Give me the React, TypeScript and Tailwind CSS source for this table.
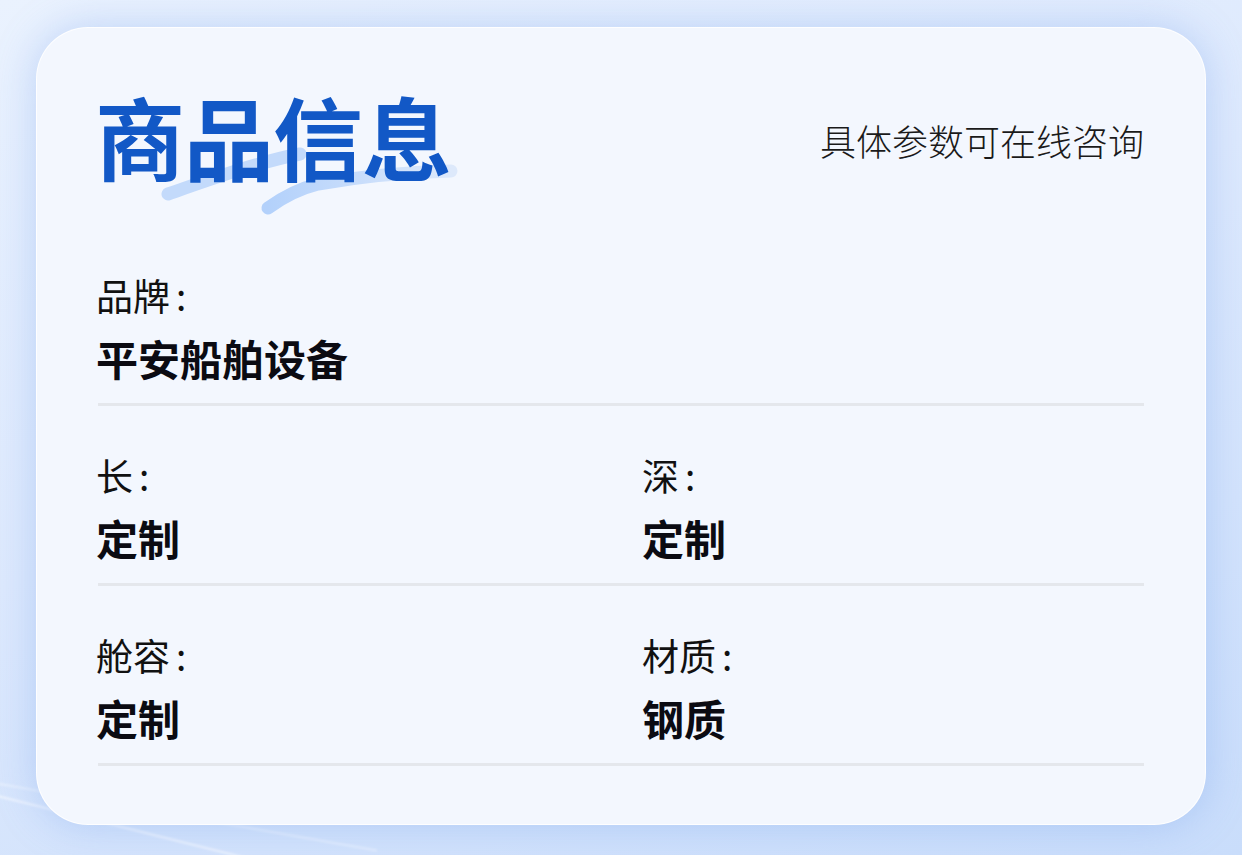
import React from 'react';

type Field = { label: string; value: string };

const rows: Field[][] = [
  [{ label: '品牌', value: '平安船舶设备' }],
  [
    { label: '长', value: '定制' },
    { label: '深', value: '定制' },
  ],
  [
    { label: '舱容', value: '定制' },
    { label: '材质', value: '钢质' },
  ],
];

const font = { fontFamily: '"Noto Sans CJK SC", "Noto Sans", sans-serif' };

const BrushStroke = () => (
  <svg
    className="absolute left-[60px] top-[50px] pointer-events-none"
    width="310"
    height="90"
    viewBox="0 0 310 90"
  >
    <defs>
      <linearGradient id="brush2" x1="0" y1="0" x2="1" y2="0">
        <stop offset="0%" stopColor="#b3d1fb" />
        <stop offset="100%" stopColor="#dde9fb" />
      </linearGradient>
    </defs>
    <path
      d="M10 54 C 50 40, 100 22, 142 14"
      stroke="#c3dafb"
      strokeWidth="13"
      strokeLinecap="round"
      fill="none"
    />
    <path
      d="M110 68 C 125 57, 140 49, 160 44 C 205 36, 255 32, 293 31"
      stroke="url(#brush2)"
      strokeWidth="13"
      strokeLinecap="round"
      fill="none"
    />
  </svg>
);

const FieldCell = ({ field }: { field: Field }) => (
  <div>
    <div className="-ml-[2px] text-[37px] leading-none text-[#111]">
      {field.label}
      <span className="ml-[6px]">:</span>
    </div>
    <div className="-ml-[2px] mt-[23px] text-[42px] leading-none font-bold text-[#0b0b12]">
      {field.value}
    </div>
  </div>
);

export default function App() {
  return (
    <div
      className="relative w-[1242px] h-[855px] overflow-hidden pt-[27px] pl-[36px] bg-[linear-gradient(160deg,#eaf2fe_0%,#dde9fd_45%,#c9ddfb_100%)]"
      style={font}
    >
      <div className="absolute -left-[60px] bottom-[10px] w-[500px] h-[2px] rotate-[14deg] bg-white/60 blur-[1px]" />
      <div className="absolute -left-[40px] bottom-[40px] w-[420px] h-[2px] rotate-[10deg] bg-white/40 blur-[1px]" />
      <div className="relative w-[1170px] h-[798px] rounded-[52px] bg-[#f3f7fe] border border-white/90 shadow-[0_0_40px_rgba(110,155,235,0.35)] pt-[62px] px-[61px]">
        <div className="flex justify-between items-start">
          <div className="relative">
            <BrushStroke />
            <h1 className="relative -ml-[3px] text-[90px] leading-none font-bold text-[#1258c6] tracking-[-1px]">
              商品信息
            </h1>
          </div>
          <div className="mt-[32px] text-[36px] leading-none font-extralight text-[#1a1a1a]">
            具体参数可在线咨询
          </div>
        </div>
        <div className="mt-[97px]">
          {rows.map((row, i) => (
            <div key={i} className={i === 0 ? '' : 'pt-[51px]'}>
              <div className={row.length > 1 ? 'grid grid-cols-[546px_1fr]' : ''}>
                {row.map((f) => (
                  <FieldCell key={f.label} field={f} />
                ))}
              </div>
              <div className="mt-[24px] h-[3px] bg-[#e4e7ec]" />
            </div>
          ))}
        </div>
      </div>
    </div>
  );
}
